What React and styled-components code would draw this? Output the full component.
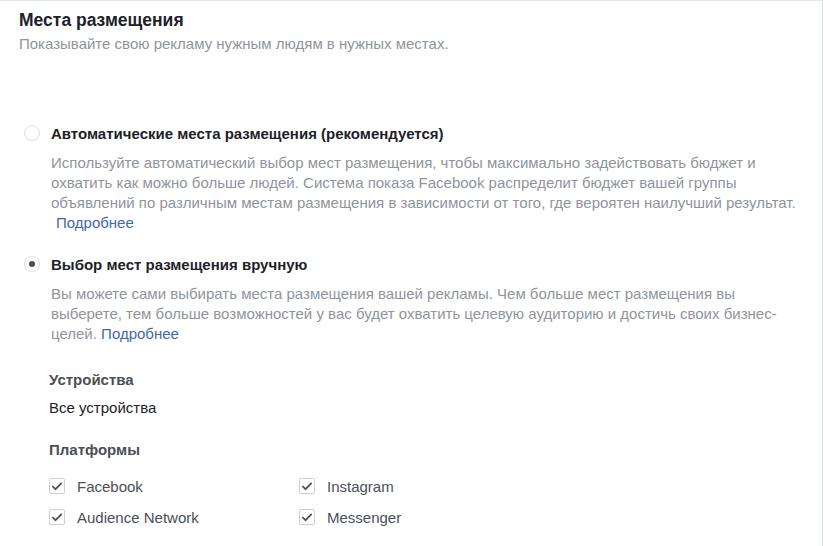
import React from "react";
import styled, { createGlobalStyle } from "styled-components";

const Global = createGlobalStyle`
  body {
    margin: 0;
    background: #fff;
    font-family: "Liberation Sans", Arial, sans-serif;
    -webkit-font-smoothing: antialiased;
  }
`;

const Panel = styled.div`
  box-sizing: border-box;
  width: 823px;
  height: 546px;
  border-top: 1px solid #e5e6e9;
  border-right: 1px solid #dddfe2;
  padding: 9px 20px 0 19px;
  overflow: hidden;
`;

const Title = styled.div`
  font-size: 17.5px;
  line-height: 20px;
  font-weight: bold;
  color: #1d2129;
`;

const Subtitle = styled.div`
  margin-top: 4px;
  font-size: 15px;
  line-height: 20px;
  color: #90949c;
`;

const Options = styled.div`
  margin-top: 69px;
  display: flex;
  flex-direction: column;
`;

const Option = styled.div`
  & + & {
    margin-top: 21px;
  }
`;

const RadioRow = styled.label`
  display: flex;
  align-items: center;
  height: 20px;
  padding-left: 5px;
  gap: 11px;
  font-size: 15px;
  font-weight: bold;
  color: #1d2129;
  cursor: pointer;
`;

const Radio = styled.span`
  box-sizing: border-box;
  width: 16px;
  height: 16px;
  border-radius: 50%;
  border: 1px solid #dadde1;
  display: flex;
  align-items: center;
  justify-content: center;
  &::after {
    content: "";
    width: 6px;
    height: 6px;
    border-radius: 50%;
    background: ${(p) => (p.$checked ? "#4b4f56" : "transparent")};
  }
`;

const Desc = styled.p`
  margin: 10px 0 0 32px;
  font-size: 15px;
  line-height: 20px;
  color: #90949c;
`;

const Link = styled.a`
  color: #4267b2;
  text-decoration: none;
  margin-left: ${(p) => (p.$indent ? 5 : 0)}px;
`;

const Details = styled.div`
  margin: 26px 0 0 30px;
`;

const SectionLabel = styled.div`
  font-size: 15px;
  line-height: 20px;
  font-weight: bold;
  color: #4b4f56;
  margin-top: ${(p) => p.$gap || 0}px;
`;

const Value = styled.div`
  margin-top: 8px;
  font-size: 15px;
  line-height: 20px;
  color: #1d2129;
`;

const Grid = styled.div`
  margin-top: 16px;
  display: grid;
  grid-template-columns: 250px 250px;
  row-gap: 11px;
`;

const CheckRow = styled.label`
  display: flex;
  align-items: center;
  height: 20px;
  gap: 12px;
  font-size: 15px;
  color: #4b4f56;
  cursor: pointer;
`;

const Box = styled.span`
  box-sizing: border-box;
  width: 16px;
  height: 16px;
  border: 1px solid #ccd0d5;
  border-radius: 2px;
  display: flex;
  align-items: center;
  justify-content: center;
`;

const Check = () => (
  <Box>
    <svg width="12" height="12" viewBox="0 0 12 12">
      <path d="M1.3 6 L4.5 9.2 L10.7 2.8" fill="none" stroke="#4b4f56" strokeWidth="1.7" />
    </svg>
  </Box>
);

const platforms = ["Facebook", "Instagram", "Audience Network", "Messenger"];

export default function App() {
  return (
    <>
      <Global />
      <Panel>
        <Title>Места размещения</Title>
        <Subtitle>Показывайте свою рекламу нужным людям в нужных местах.</Subtitle>
        <Options>
          <Option>
            <RadioRow>
              <Radio />
              Автоматические места размещения (рекомендуется)
            </RadioRow>
            <Desc>
              Используйте автоматический выбор мест размещения, чтобы максимально
              задействовать бюджет и охватить как можно больше людей. Система показа
              Facebook распределит бюджет вашей группы объявлений по различным местам
              размещения в зависимости от того, где вероятен наилучший результат.{" "}
              <Link href="#" $indent>Подробнее</Link>
            </Desc>
          </Option>
          <Option>
            <RadioRow>
              <Radio $checked />
              Выбор мест размещения вручную
            </RadioRow>
            <Desc>
              Вы можете сами выбирать места размещения вашей рекламы. Чем больше мест
              размещения вы выберете, тем больше возможностей у вас будет охватить
              целевую аудиторию и достичь своих бизнес-целей.{" "}
              <Link href="#">Подробнее</Link>
            </Desc>
          </Option>
        </Options>
        <Details>
          <SectionLabel>Устройства</SectionLabel>
          <Value>Все устройства</Value>
          <SectionLabel $gap={22}>Платформы</SectionLabel>
          <Grid>
            {platforms.map((p) => (
              <CheckRow key={p}>
                <Check />
                {p}
              </CheckRow>
            ))}
          </Grid>
        </Details>
      </Panel>
    </>
  );
}
